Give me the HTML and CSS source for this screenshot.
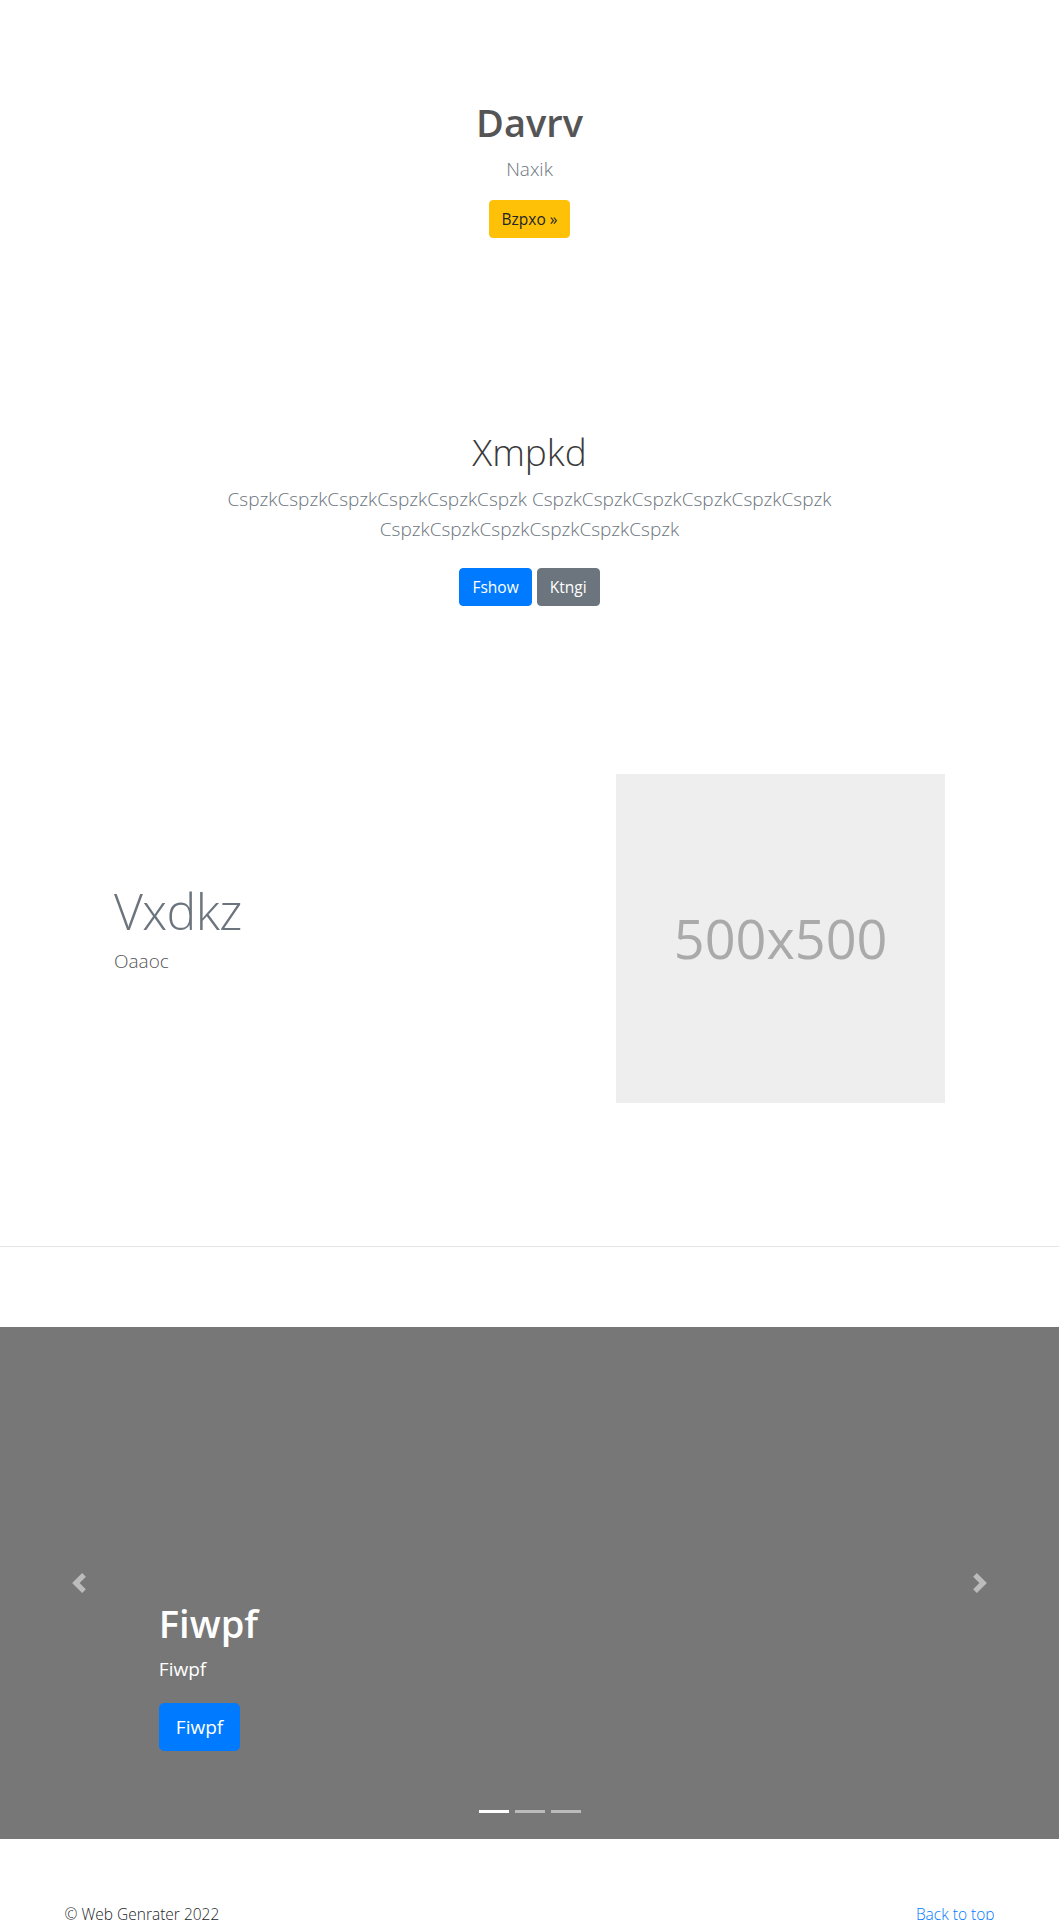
FILE: index.html
```html
<!DOCTYPE html>
<html lang="en">
<head>
<meta charset="utf-8">
<title>Web Genrater</title>
<link rel="stylesheet" href="styles.css">
</head>
<body>
<section class="hero">
  <h1 class="hero-title">Davrv</h1>
  <p class="hero-lead">Naxik</p>
  <a class="btn btn-warning" href="#">Bzpxo &raquo;</a>
</section>

<section class="album">
  <div class="album-inner">
    <h1 class="album-title">Xmpkd</h1>
    <p class="album-lead">CspzkCspzkCspzkCspzkCspzkCspzk CspzkCspzkCspzkCspzkCspzkCspzk CspzkCspzkCspzkCspzkCspzkCspzk</p>
    <p class="album-actions">
      <a class="btn btn-primary" href="#">Fshow</a>
      <a class="btn btn-secondary" href="#">Ktngi</a>
    </p>
  </div>
</section>

<div class="featurette">
  <div class="feature-text">
    <h2 class="feature-heading">Vxdkz</h2>
    <p class="feature-lead">Oaaoc</p>
  </div>
  <div class="feature-media">
    <div class="placeholder"><span>500x500</span></div>
  </div>
</div>

<hr class="divider">

<div class="carousel">
  <ol class="indicators">
    <li class="active"></li>
    <li></li>
    <li></li>
  </ol>
  <div class="caption">
    <h1 class="caption-title">Fiwpf</h1>
    <p class="caption-text">Fiwpf</p>
    <p class="caption-action"><a class="btn btn-lg btn-primary" href="#">Fiwpf</a></p>
  </div>
  <a class="control control-prev" href="#">
    <svg width="20" height="20" viewBox="0 0 8 8" fill="#fff"><path d="M5.25 0l-4 4 4 4 1.5-1.5L4.25 4l2.5-2.5L5.25 0z"/></svg>
  </a>
  <a class="control control-next" href="#">
    <svg width="20" height="20" viewBox="0 0 8 8" fill="#fff"><path d="M2.75 0l-1.5 1.5L3.75 4l-2.5 2.5L2.75 8l4-4-4-4z"/></svg>
  </a>
</div>

<footer class="footer">
  <p class="back"><a href="#">Back to top</a></p>
  <p class="copy">&copy; Web Genrater 2022</p>
</footer>
</body>
</html>
```

FILE: styles.css
```css
* { box-sizing: border-box; }

body {
  margin: 0;
  font-family: "Open Sans", "Noto Sans", "Liberation Sans", sans-serif;
  font-size: 16px;
  font-weight: 300;
  line-height: 1.5;
  color: #212529;
  background: #fff;
}

h1, h2, p { margin: 0; }

.btn {
  display: inline-block;
  padding: 6px 12px;
  font-size: 15.5px;
  font-weight: 400;
  line-height: 24px;
  border: 1px solid transparent;
  border-radius: 4px;
  text-decoration: none;
  text-align: center;
}
.btn-lg { padding: 8px 16px; font-size: 19px; line-height: 30px; border-radius: 5px; }
.btn-warning { background: #ffc107; border-color: #ffc107; color: #212529; }
.btn-primary { background: #007bff; border-color: #007bff; color: #fff; }
.btn-secondary { background: #6c757d; border-color: #6c757d; color: #fff; }

/* hero */
.hero {
  text-align: center;
  padding: 98px 15px 94px;
}
.hero-title {
  font-size: 38px;
  font-weight: 600;
  line-height: 48px;
  color: #555;
  margin-bottom: 8px;
}
.hero-lead {
  font-size: 19px;
  line-height: 30px;
  color: #6c757d;
  margin-bottom: 16px;
}

/* album jumbotron */
.album { text-align: center; padding: 96px 15px 0; }
.album-inner { max-width: 720px; margin: 0 auto; }
.album-title {
  font-size: 37px;
  font-weight: 300;
  line-height: 48px;
  color: #3a3a3a;
  margin-bottom: 8px;
}
.album-lead {
  font-size: 19px;
  line-height: 30px;
  color: #6c757d;
  margin-bottom: 16px;
}
.album-actions {
  display: flex;
  justify-content: center;
  gap: 5px;
}
.album-actions .btn { margin: 8px 0; }

/* featurette */
.featurette {
  max-width: 861px;
  margin: 160px auto 0;
  display: grid;
  grid-template-columns: 7fr 5fr;
  align-items: center;
}
.feature-text, .feature-media { padding: 0 15px; }
.feature-heading {
  font-size: 50px;
  font-weight: 300;
  line-height: 54px;
  letter-spacing: -0.6px;
  color: #6c757d;
  margin-bottom: 8px;
}
.feature-lead {
  font-size: 19px;
  line-height: 30px;
  color: #555;
  margin-bottom: 16px;
}
.placeholder {
  aspect-ratio: 1 / 1;
  background: #eee;
  display: flex;
  align-items: center;
  justify-content: center;
}
.placeholder span {
  font-size: 54px;
  font-weight: 400;
  color: #aaa;
  line-height: 1;
}

/* divider */
.divider {
  margin: 143px 0 80px;
  border: 0;
  border-top: 1px solid rgba(0, 0, 0, 0.1);
  height: 0;
}

/* carousel */
.carousel {
  position: relative;
  height: 512px;
  background: #777;
  margin-bottom: 64px;
  overflow: hidden;
}
.caption {
  position: absolute;
  left: 15%;
  right: 15%;
  bottom: 48px;
  padding: 20px 0;
  color: #fff;
  z-index: 10;
}
.caption-title {
  font-size: 38px;
  font-weight: 600;
  line-height: 48px;
  margin-bottom: 8px;
}
.caption-text {
  font-size: 19px;
  font-weight: 400;
  line-height: 28px;
  margin-bottom: 20px;
}
.caption-action { margin-bottom: 20px; line-height: 0; }
.caption-action .btn { vertical-align: top; }

.control {
  position: absolute;
  top: 0;
  bottom: 0;
  width: 15%;
  display: flex;
  align-items: center;
  justify-content: center;
  opacity: 0.5;
  z-index: 5;
}
.control-prev { left: 0; }
.control-next { right: 0; }

.indicators {
  position: absolute;
  left: 15%;
  right: 15%;
  bottom: 0;
  margin: 0 0 16px;
  padding: 0;
  list-style: none;
  display: flex;
  justify-content: center;
  z-index: 15;
}
.indicators li {
  width: 30px;
  height: 3px;
  margin: 10px 3px;
  background: #fff;
  opacity: 0.5;
}
.indicators li.active { opacity: 1; }

/* footer */
.footer {
  max-width: 960px;
  margin: 0 auto;
  padding: 0 15px;
}
.footer p { margin-bottom: 16px; font-size: 15.5px; }
.back { float: right; }
.back a { color: #007bff; text-decoration: none; font-weight: 300; }
.copy { color: #212529; }
```
